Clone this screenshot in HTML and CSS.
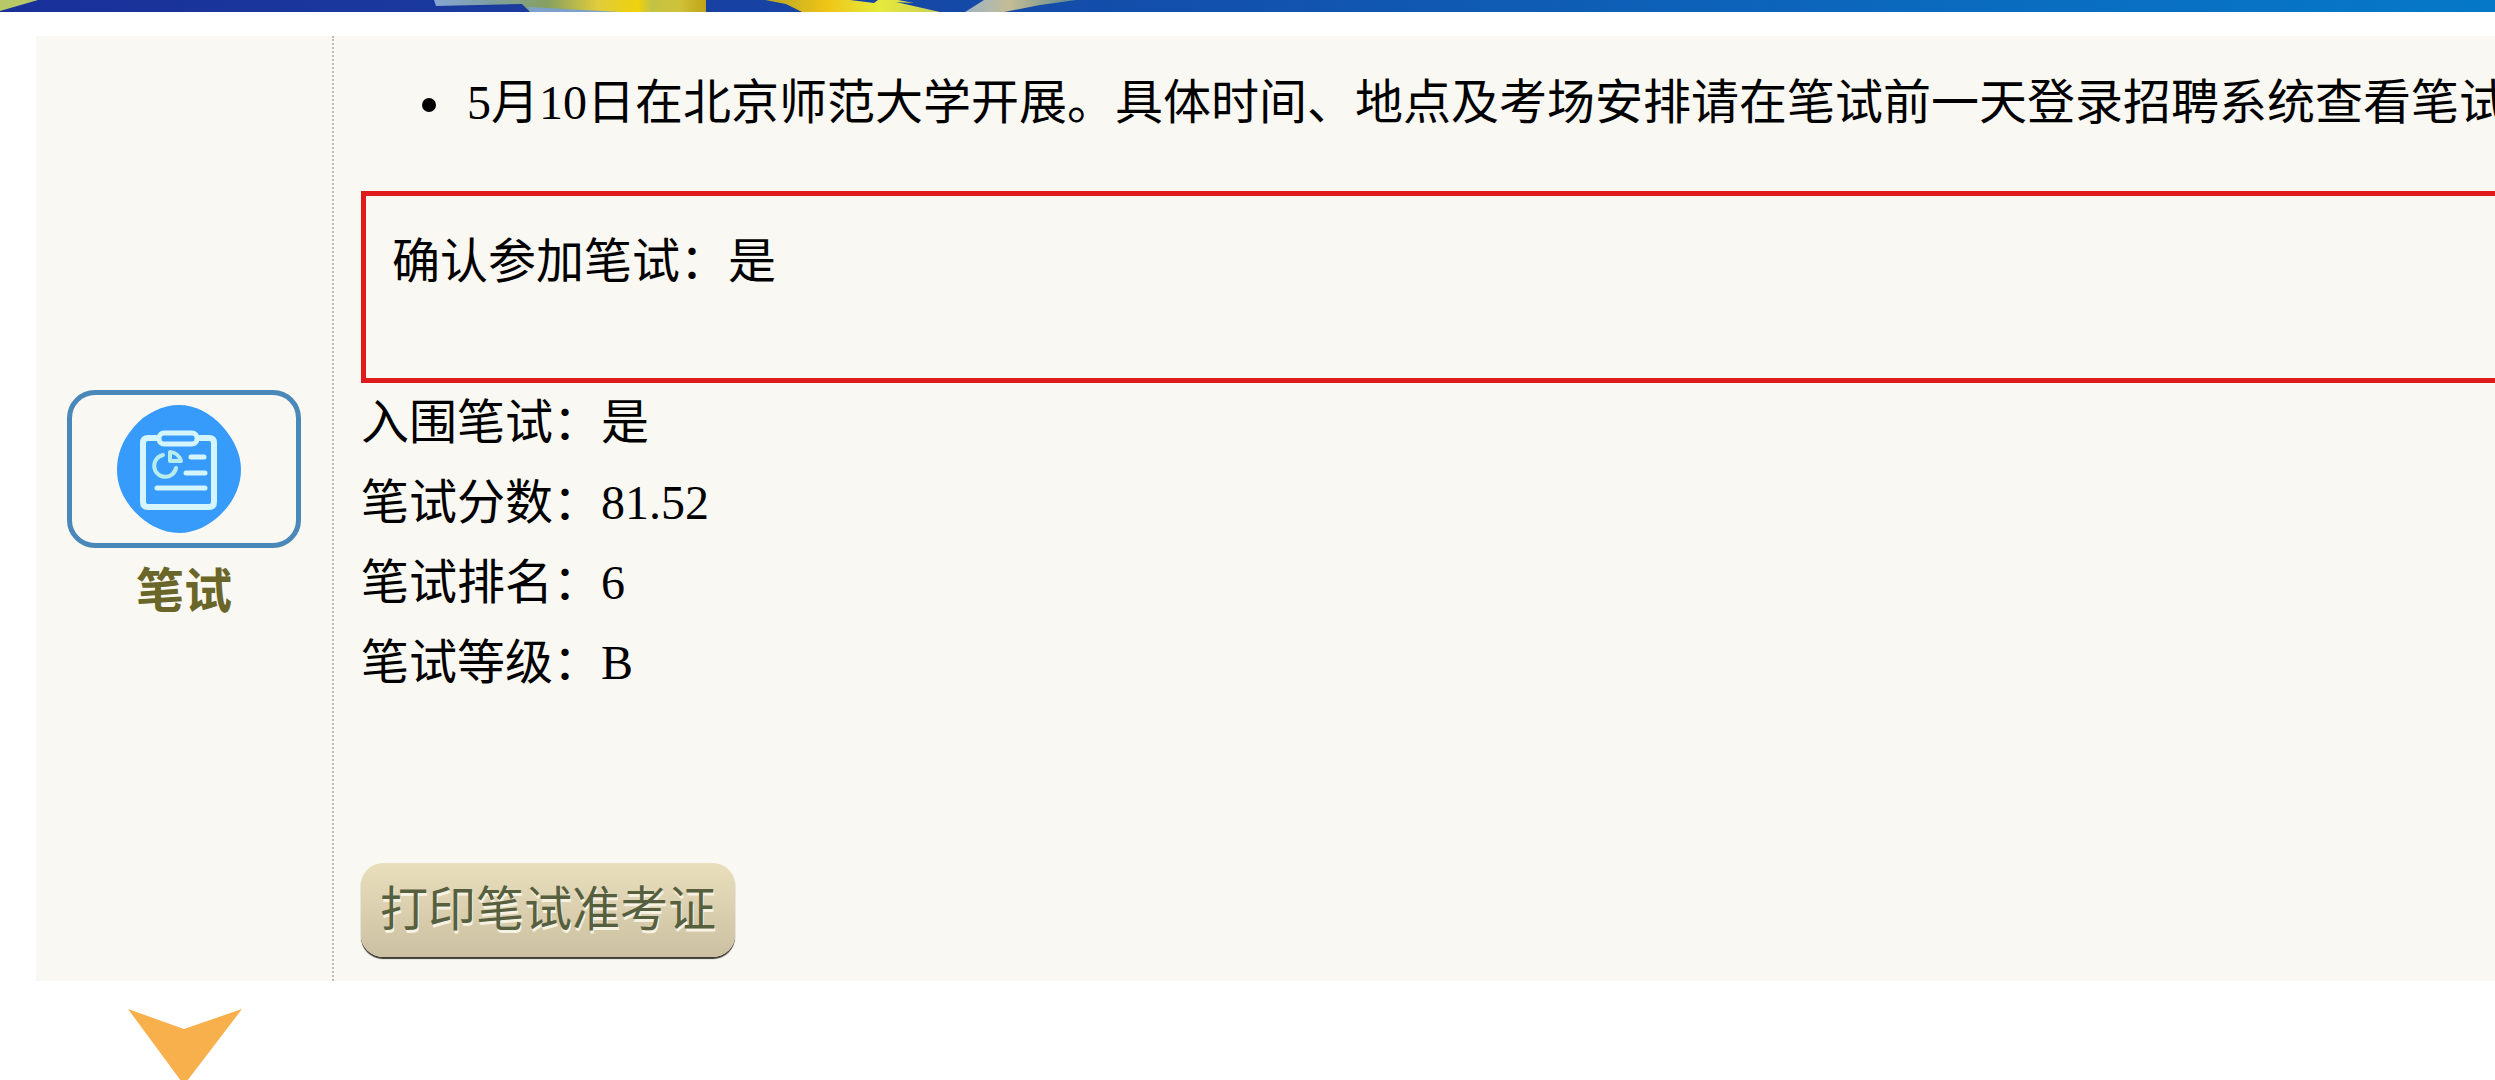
FILE: index.html
```html
<!DOCTYPE html>
<html lang="zh-CN">
<head>
  <meta charset="UTF-8" />
  <title>笔试</title>
  <link rel="stylesheet" href="styles.css">
</head>
<body>
  <header class="banner">
    <svg viewBox="0 0 2495 12" preserveAspectRatio="none" aria-hidden="true">
      <defs>
        <linearGradient id="sky">
          <stop offset="0" stop-color="#19309a" />
          <stop offset="0.2" stop-color="#1a3a9e" />
          <stop offset="0.5" stop-color="#1252ae" />
          <stop offset="0.8" stop-color="#0a6cbf" />
          <stop offset="1" stop-color="#0678c8" />
        </linearGradient>
        <linearGradient id="ribbon">
          <stop offset="0" stop-color="#86a6d4" />
          <stop offset="0.2" stop-color="#7f9fa5" />
          <stop offset="0.42" stop-color="#87a05f" />
          <stop offset="0.6" stop-color="#e0cc3c" />
          <stop offset="0.75" stop-color="#efd10c" />
          <stop offset="0.8" stop-color="#c3c344" />
          <stop offset="0.9" stop-color="#cfc23a" />
          <stop offset="1" stop-color="#c0a416" />
        </linearGradient>
        <linearGradient id="petal">
          <stop offset="0" stop-color="#b5a528" />
          <stop offset="0.35" stop-color="#efc516" />
          <stop offset="0.65" stop-color="#e6ea3c" />
          <stop offset="1" stop-color="#c9cf55" />
        </linearGradient>
        <linearGradient id="tail">
          <stop offset="0" stop-color="#9db4c4" />
          <stop offset="0.4" stop-color="#c4bc96" />
          <stop offset="1" stop-color="#5f8a8c" />
        </linearGradient>
      </defs>
      <rect width="2495" height="12" fill="url(#sky)" />
      <path d="M0 0H38L0 11Z" fill="#b8c866" />
      <path d="M434 0H706V12H530L522 4L436 6Z" fill="url(#ribbon)" />
      <path d="M528 7L620 12H530Z" fill="#7ca2cc" />
      <path d="M765 0H850L874 3L878 0H898L914 3L896 2L940 12H802L786 4Z" fill="url(#petal)" />
      <path d="M984 0H1076L1040 5L1004 12H965Z" fill="url(#tail)" />
    </svg>
  </header>

  <main>
    <section class="step">
      <div class="step-name">
        <div class="icon-box">
          <svg class="icon" viewBox="0 0 124 128" aria-hidden="true">
            <path d="M62 0C78 0 94 8 106 22C118 36 124 50 124 65C124 80 117 96 106 107C94 120 78 128 62 128C46 128 29 119 18 107C6 94 0 80 0 65C0 50 5 36 16 23C28 8 46 0 62 0Z" fill="#369bfa" />
            <g fill="none" stroke="#d5f5fc" stroke-width="6" stroke-linecap="round" stroke-linejoin="round">
              <path d="M39 33H31Q26 33 26 38V97Q26 102 31 102H92Q97 102 97 97V38Q97 33 92 33H83" />
              <rect x="42" y="28" width="38" height="11" rx="5" stroke-width="5" />
              <path d="M74 52H87M69 68H88M40 83H88" stroke-width="5" />
              <path d="M46 50A11 11 0 1 0 59 63" stroke="#b8edee" stroke-width="4" />
              <path d="M53 47V56H64A12 12 0 0 0 53 47Z" stroke="#b8edee" stroke-width="4" />
            </g>
          </svg>
        </div>
        <strong>笔试</strong>
      </div>

      <div class="step-body">
        <ul>
          <li>5月10日在北京师范大学开展。具体时间、地点及考场安排请在笔试前一天登录招聘系统查看笔试</li>
        </ul>
        <div class="confirm">确认参加笔试：是</div>
        <div>入围笔试：是</div>
        <div>笔试分数：81.52</div>
        <div>笔试排名：6</div>
        <div>笔试等级：B</div>
        <button type="button" class="print">打印笔试准考证</button>
      </div>
    </section>

    <svg class="arrow" viewBox="0 0 114 76" aria-hidden="true">
      <path d="M0 0L56 20L114 0L56 76Z" fill="#f8b04c" />
    </svg>
  </main>
</body>
</html>
```

FILE: styles.css
```css
body {
  margin: 0;
  background: #fff;
  color: #000;
  font-family: "Liberation Serif", "Noto Sans CJK SC", serif;
  font-size: 48px;
  line-height: 80px;
  height: 100vh;
  overflow: hidden;
}
.banner svg {
  display: block;
  width: 100%;
  height: 12px;
}
main {
  padding: 24px 0 0 36px;
}
.step {
  display: flex;
  background: #f9f8f2;
}
.step-name {
  flex: none;
  width: 296px;
  padding-top: 4px;
  display: flex;
  flex-direction: column;
  align-items: center;
  justify-content: center;
  gap: 4px;
  border-right: 2px dotted #bbb;
}
.icon-box {
  box-sizing: border-box;
  width: 234px;
  height: 158px;
  padding-right: 10px;
  display: flex;
  align-items: center;
  justify-content: center;
  border: 5px solid #4988b9;
  border-radius: 28px;
}
.icon {
  width: 124px;
  height: 128px;
}
.step-name strong {
  color: #6a6528;
}
.step-body {
  flex: 1;
  min-width: 0;
  padding: 27px 0 24px 27px;
  white-space: nowrap;
}
ul {
  margin: 0 0 48px;
  padding-left: 96px;
}
li {
  padding-left: 10px;
}
.confirm {
  padding: 26px 26px 76px;
  border: 5px solid #e01b1b;
  border-right: 0;
}
.print {
  display: block;
  margin-top: 160px;
  padding: 7px 19px;
  border: 0;
  border-radius: 22px;
  background: linear-gradient(#e9dfbd, #cbc0a1);
  box-shadow: 0 2px 1px #3c3834;
  color: #56603f;
  font: inherit;
  text-shadow: 1px 3px 0 #f6f1e0;
  cursor: pointer;
}
.arrow {
  display: block;
  width: 114px;
  height: 76px;
  margin: 28px 0 0 92px;
}
```
